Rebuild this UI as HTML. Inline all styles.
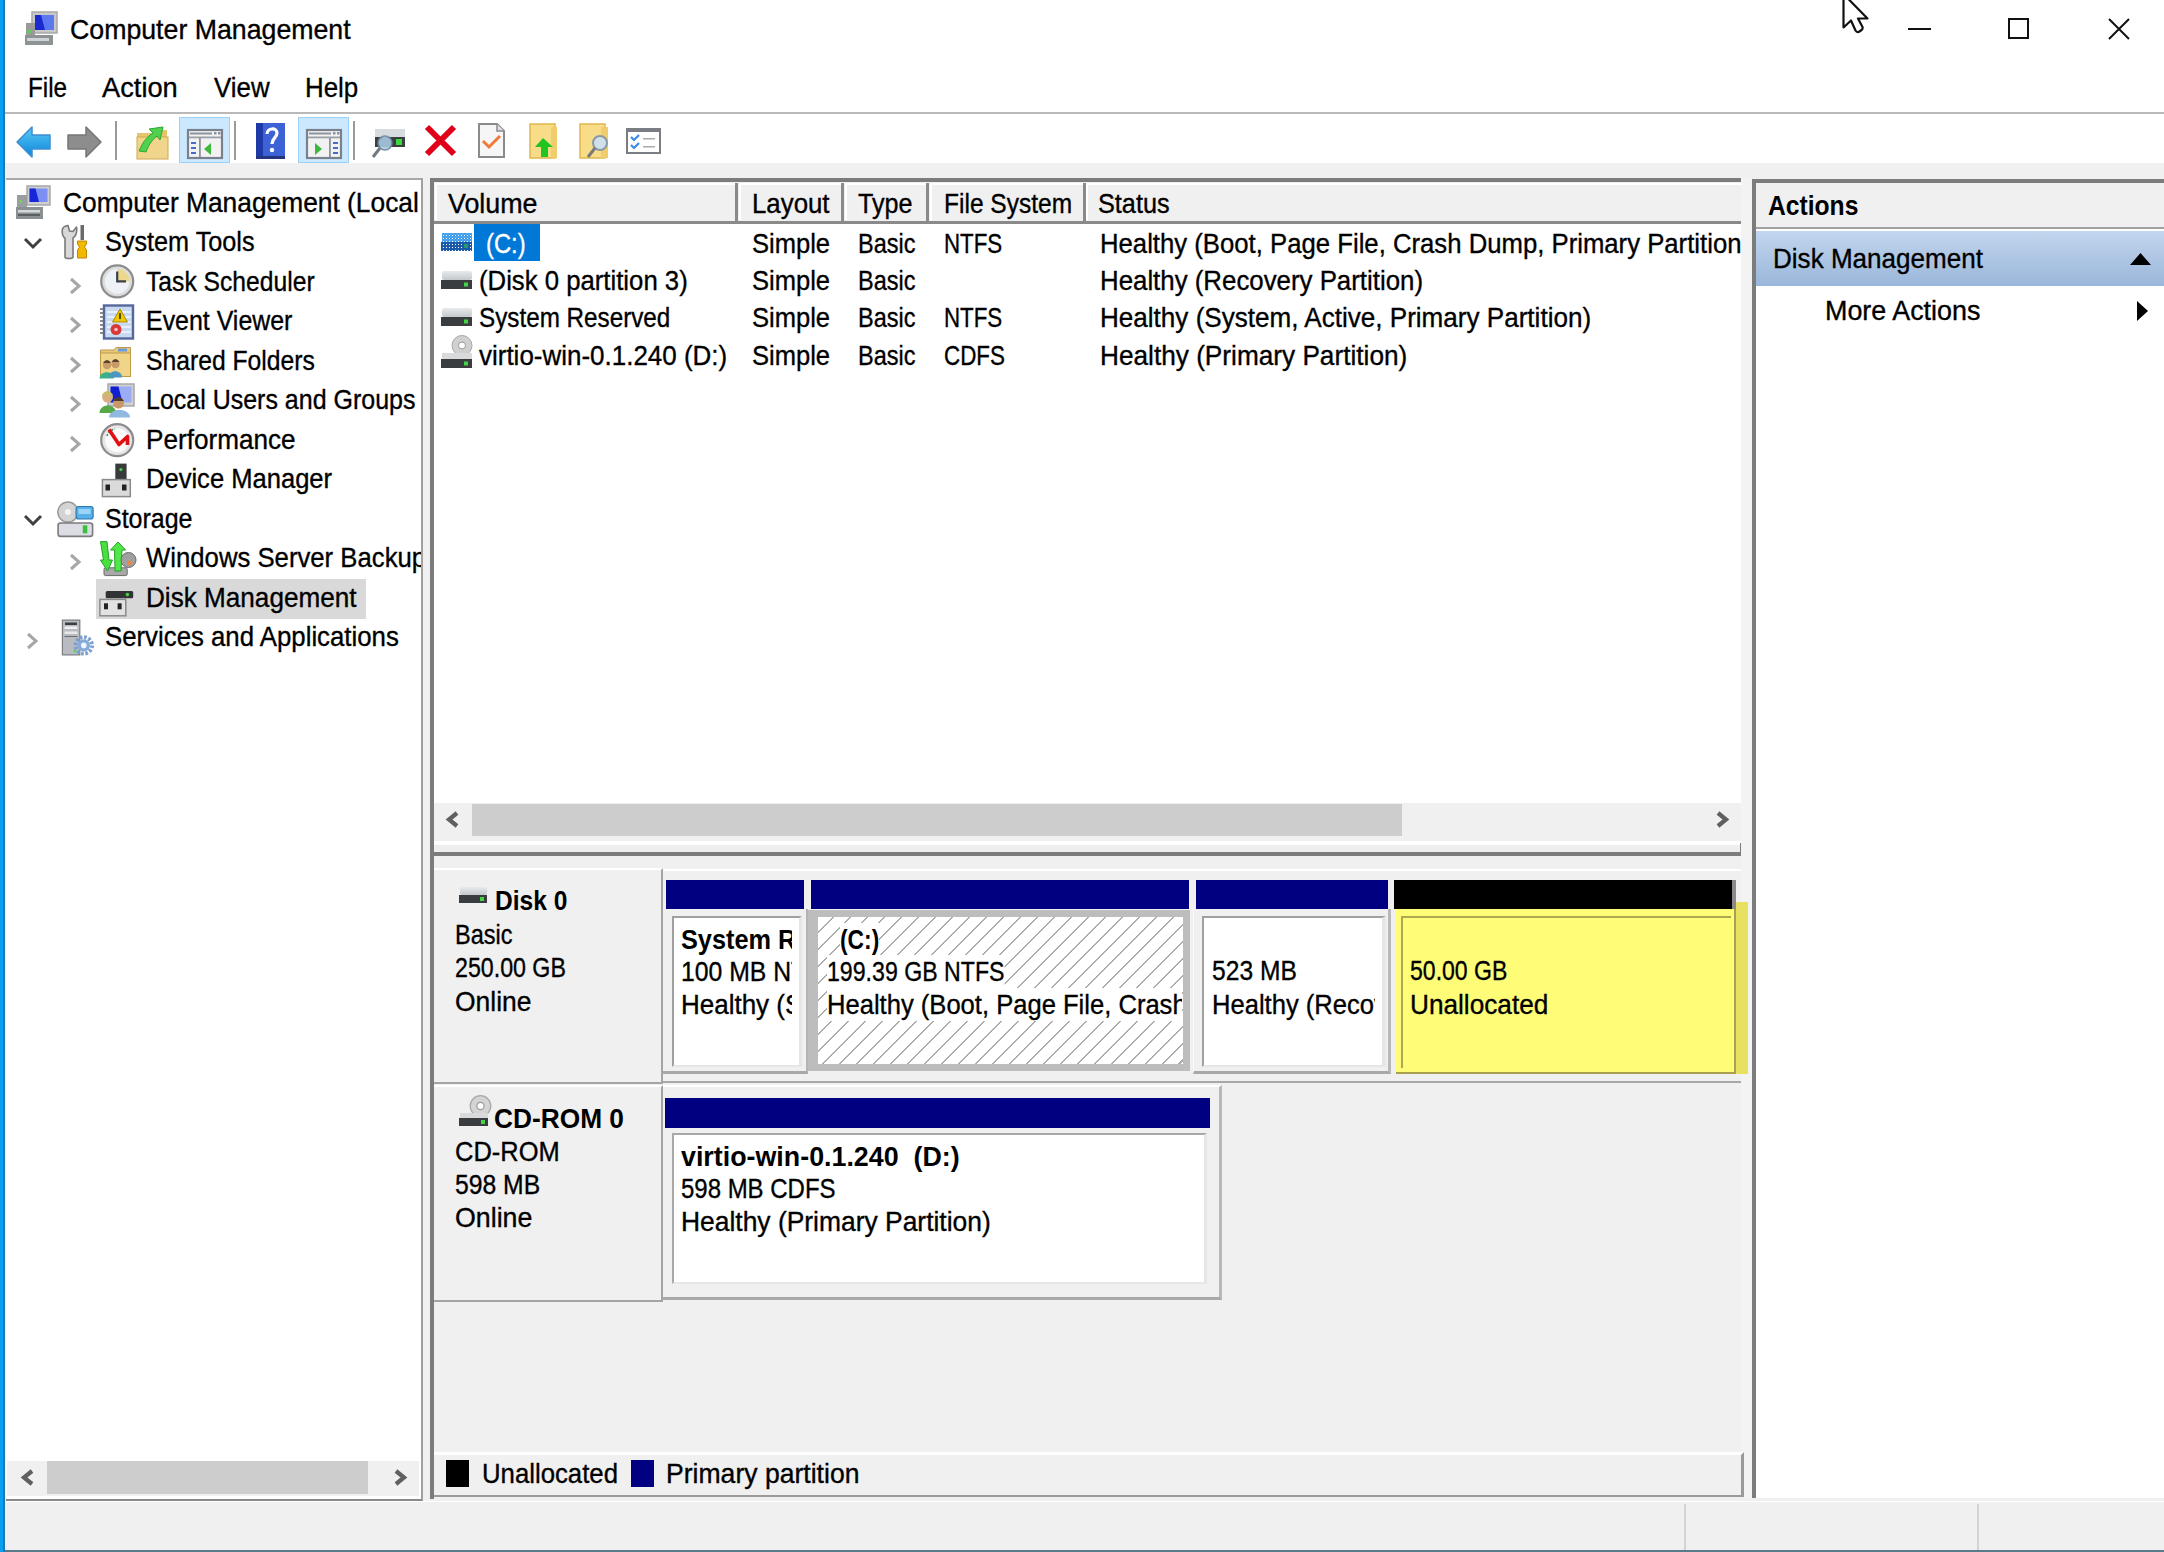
<!DOCTYPE html>
<html><head><meta charset="utf-8"><title>Computer Management</title>
<style>
html,body{margin:0;padding:0;}
body{width:2164px;height:1552px;position:relative;overflow:hidden;background:#f0f0f0;font-family:"Liberation Sans",sans-serif;color:#000;}
.t{position:absolute;white-space:nowrap;-webkit-text-stroke:0.35px currentColor;}
.r{position:absolute;box-sizing:border-box;}
svg{position:absolute;overflow:visible;}
</style></head><body>
<div class="r" style="left:0px;top:0px;width:2164px;height:163px;background:#ffffff;"></div>
<div class="r" style="left:0px;top:112px;width:2164px;height:2px;background:#b9b9b9;"></div>
<div class="t" style="left:70.00px;top:13.20px;font-size:28px;line-height:33.6px;"><span style="display:inline-block;transform:scaleX(0.9540);transform-origin:0 0;">Computer Management</span></div>
<div class="t" style="left:28.30px;top:70.57px;font-size:27.5px;line-height:33.0px;"><span style="display:inline-block;transform:scaleX(0.8811);transform-origin:0 0;">File</span></div>
<div class="t" style="left:102.30px;top:70.57px;font-size:27.5px;line-height:33.0px;"><span style="display:inline-block;transform:scaleX(0.9912);transform-origin:0 0;">Action</span></div>
<div class="t" style="left:213.80px;top:70.57px;font-size:27.5px;line-height:33.0px;"><span style="display:inline-block;transform:scaleX(0.9401);transform-origin:0 0;">View</span></div>
<div class="t" style="left:305.30px;top:70.57px;font-size:27.5px;line-height:33.0px;"><span style="display:inline-block;transform:scaleX(0.9416);transform-origin:0 0;">Help</span></div>
<svg style="left:23px;top:11px" width="35" height="35" viewBox="0 0 35 35">
<rect x="9" y="1" width="25" height="21" fill="#c8c8c8" stroke="#a9a9a9" stroke-width="1.5"/>
<rect x="12" y="4" width="19" height="15" fill="#5a78f0"/>
<path d="M12 4h6l4 15h-10z" fill="#1a2ad0"/>
<rect x="3" y="12" width="9" height="14" fill="#9a9a9a"/>
<rect x="2" y="24" width="28" height="10" fill="#8e9496"/>
<rect x="4" y="27" width="22" height="3" fill="#d0d4d6"/>
<rect x="5" y="19" width="3" height="3" fill="#5cd05c"/>
</svg>
<div class="r" style="left:1908px;top:28px;width:23px;height:2px;background:#111;"></div>
<div class="r" style="left:2008px;top:18px;width:21px;height:21px;background:transparent;border:2px solid #111;"></div>
<svg style="left:2108px;top:18px" width="22" height="22" viewBox="0 0 22 22"><path d="M1 1L21 21M21 1L1 21" stroke="#111" stroke-width="2"/></svg>
<svg style="left:1842px;top:0px" width="27" height="33" viewBox="0 0 27 33"><path d="M1.5 -6 L1.5 27.5 L9 20.5 L13.5 30.5 Q15 33 17.5 31.5 L19.5 30 Q21 29 20.5 27 L16 18.5 L25.5 18.5 Z" fill="#fff" stroke="#111" stroke-width="2.2" stroke-linejoin="round"/></svg>
<svg style="left:16px;top:125px" width="36" height="34" viewBox="0 0 36 34">
<defs><linearGradient id="gb" x1="0" y1="0" x2="0" y2="1"><stop offset="0" stop-color="#5ccaf8"/><stop offset="1" stop-color="#0a84d8"/></linearGradient></defs>
<path d="M1 17 L16 2 L16 10 L34 10 L34 24 L16 24 L16 32 Z" fill="url(#gb)" stroke="#3c8fd0" stroke-width="1.5" stroke-linejoin="round"/>
</svg>
<svg style="left:66px;top:125px" width="36" height="34" viewBox="0 0 36 34">
<path d="M35 17 L20 2 L20 10 L2 10 L2 24 L20 24 L20 32 Z" fill="#8d8d8d" stroke="#767676" stroke-width="1.5" stroke-linejoin="round"/>
</svg>
<div class="r" style="left:115px;top:121px;width:2px;height:39px;background:#9a9a9a;"></div>
<div class="r" style="left:234px;top:121px;width:2px;height:39px;background:#9a9a9a;"></div>
<div class="r" style="left:353px;top:121px;width:2px;height:39px;background:#9a9a9a;"></div>
<svg style="left:137px;top:125px" width="32" height="34" viewBox="0 0 32 34">
<path d="M0 8h16l2 -3h12v29h-30z" fill="#e8c46c"/>
<rect x="0" y="12" width="31" height="22" fill="#f2d58c" stroke="#cfa94f" stroke-width="1"/>
<path d="M2 26 C6 16 11 11 16 8 L12 4 L26 2 L23 15 L20 11 C16 14 12 19 9 27 Z" fill="#4fd04f" stroke="#2fa82f" stroke-width="1"/>
</svg>
<div class="r" style="left:179px;top:117px;width:51px;height:46px;background:#cce8ff;border:1px solid #99d1ff;"></div>
<div class="r" style="left:298px;top:117px;width:51px;height:46px;background:#cce8ff;border:1px solid #99d1ff;"></div>
<svg style="left:187px;top:129px" width="36" height="30" viewBox="0 0 36 30">
<rect x="1" y="1" width="34" height="28" fill="#f2f2f2" stroke="#7a818c" stroke-width="2.2"/>
<rect x="3" y="3.5" width="22" height="2" fill="#8c939c"/>
<rect x="27" y="3" width="2.5" height="2.5" fill="#8c939c"/><rect x="31" y="3" width="2.5" height="2.5" fill="#8c939c"/>
<rect x="2" y="7.5" width="32" height="1.8" fill="#9aa0a8"/>
<rect x="12" y="9" width="1.8" height="19" fill="#8c939c"/>
<rect x="4" y="13" width="5" height="2" fill="#4a6ac8"/><rect x="4" y="18" width="5" height="2" fill="#4a6ac8"/><rect x="4" y="23" width="5" height="2" fill="#4a6ac8"/>
<path d="M17 20 L24 14 L24 26 Z" fill="#3cb83c"/></svg>
<svg style="left:306px;top:129px" width="36" height="30" viewBox="0 0 36 30">
<rect x="1" y="1" width="34" height="28" fill="#f2f2f2" stroke="#7a818c" stroke-width="2.2"/>
<rect x="3" y="3.5" width="22" height="2" fill="#8c939c"/>
<rect x="27" y="3" width="2.5" height="2.5" fill="#8c939c"/><rect x="31" y="3" width="2.5" height="2.5" fill="#8c939c"/>
<rect x="2" y="7.5" width="32" height="1.8" fill="#9aa0a8"/>
<rect x="23" y="9" width="1.8" height="19" fill="#8c939c"/>
<rect x="27" y="13" width="5" height="2" fill="#4a6ac8"/><rect x="27" y="18" width="5" height="2" fill="#4a6ac8"/><rect x="27" y="23" width="5" height="2" fill="#4a6ac8"/>
<path d="M9 14 L16 20 L9 26 Z" fill="#3cb83c"/></svg>
<svg style="left:256px;top:123px" width="29" height="36" viewBox="0 0 29 36">
<rect x="0" y="0" width="29" height="36" fill="#3d62d6"/>
<rect x="0" y="0" width="7" height="36" fill="#1d3aa8"/>
<rect x="0" y="33" width="29" height="3" fill="#23357c"/>
<path d="M11 11 C11 5 21 4 21 10 C21 15 16 15 16 21" fill="none" stroke="#fff" stroke-width="3.2"/>
<circle cx="16" cy="27" r="2.2" fill="#fff"/>
</svg>
<svg style="left:372px;top:128px" width="35" height="31" viewBox="0 0 35 31">
<rect x="3" y="1" width="30" height="8" fill="#d8dcde"/>
<rect x="3" y="9" width="30" height="10" fill="#3b3f42"/>
<rect x="24" y="11" width="6" height="6" fill="#3ed63e"/>
<circle cx="13" cy="15" r="7" fill="#a8c8e0" stroke="#6a8aa0" stroke-width="1.5" opacity="0.9"/>
<path d="M8 20 L1 29" stroke="#707a80" stroke-width="3"/>
</svg>
<svg style="left:425px;top:125px" width="31" height="31" viewBox="0 0 31 31"><path d="M2 2L29 29M29 2L2 29" stroke="#e0001a" stroke-width="6"/></svg>
<svg style="left:478px;top:123px" width="27" height="35" viewBox="0 0 27 35">
<path d="M1 1 H19 L26 8 V34 H1 Z" fill="#f6f6f6" stroke="#8a8a8a" stroke-width="2"/>
<path d="M19 1 V8 H26" fill="#e0e0e0" stroke="#8a8a8a" stroke-width="1.5"/>
<path d="M5 18 L11 24 L22 13" fill="none" stroke="#f07a3a" stroke-width="3"/>
</svg>
<svg style="left:529px;top:123px" width="29" height="35" viewBox="0 0 29 35">
<rect x="1" y="1" width="25" height="34" fill="#f8dc88" stroke="#e0b84c" stroke-width="1.5"/>
<rect x="22" y="4" width="6" height="31" fill="#f0cc6a"/>
<path d="M14 15 L24 24 H19 V34 H12 V24 H6 Z" fill="#22c422"/>
</svg>
<svg style="left:579px;top:123px" width="32" height="35" viewBox="0 0 32 35">
<rect x="1" y="1" width="25" height="34" fill="#f8dc88" stroke="#e0b84c" stroke-width="1.5"/>
<rect x="22" y="4" width="7" height="31" fill="#f0cc6a"/>
<circle cx="21" cy="20" r="7" fill="#cfe0ea" stroke="#8a9aa4" stroke-width="2"/>
<path d="M16 25 L9 34" stroke="#7a7a7a" stroke-width="3"/>
</svg>
<svg style="left:626px;top:128px" width="35" height="26" viewBox="0 0 35 26">
<rect x="1" y="1" width="33" height="24" fill="#fff" stroke="#7a7e84" stroke-width="2"/>
<rect x="1" y="1" width="33" height="3" fill="#7a7e84"/>
<path d="M5 9 L8 12 L13 7 M5 17 L8 20 L13 15" fill="none" stroke="#3a8ae8" stroke-width="2.2"/>
<rect x="17" y="10" width="12" height="1.5" fill="#aaa"/><rect x="17" y="18" width="12" height="1.5" fill="#aaa"/>
</svg>
<div class="r" style="left:6px;top:178px;width:417px;height:1323px;background:#ffffff;border-top:2px solid #a8a8a8;border-right:2px solid #a0a0a0;border-bottom:2px solid #8a8a8a;"></div>
<div class="r" style="left:96px;top:579px;width:270px;height:40px;background:#d9d9d9;"></div>
<div class="t" style="left:63.00px;top:185.67px;font-size:27.5px;line-height:33.0px;width:358.0px;overflow:hidden;"><span style="display:inline-block;transform:scaleX(0.9580);transform-origin:0 0;">Computer Management (Local</span></div>
<svg style="left:15px;top:184.7px" width="38" height="38" viewBox="0 0 38 38">
<rect x="12" y="1" width="23" height="19" fill="#cfcfcf" stroke="#a8a8a8" stroke-width="1.5"/>
<rect x="14.5" y="3.5" width="18" height="13.5" fill="#7c90f4"/>
<path d="M14.5 3.5h6l3.5 13.5h-9.5z" fill="#1626d8"/>
<rect x="2" y="10" width="10" height="15" fill="#9a9e9e"/>
<rect x="4" y="15" width="3" height="3" fill="#6cd06c"/>
<rect x="1" y="22" width="27" height="12" fill="#8a9092"/>
<rect x="3" y="25" width="22" height="2.5" fill="#d4d8da"/>
<rect x="3" y="29" width="22" height="2" fill="#5a6062"/>
</svg>
<div class="t" style="left:104.70px;top:225.17px;font-size:27.5px;line-height:33.0px;"><span style="display:inline-block;transform:scaleX(0.9172);transform-origin:0 0;">System Tools</span></div>
<svg style="left:57px;top:224.2px" width="38" height="38" viewBox="0 0 38 38">
<path d="M5.5 5 C4.5 10 6.5 13.5 8 14 L8 33 C8 35 16 35 16 33 L16 14 C18 13 20.5 9 19.5 3 L16 7.5 L12.5 7 L11 1.5 C8 2 6 3 5.5 5 Z" fill="#d8d8d8" stroke="#7a7a7a" stroke-width="1.6" stroke-linejoin="round"/>
<rect x="23.5" y="1" width="3.5" height="15" fill="#6a6a6a"/>
<path d="M20.5 17 h9 v3 l-2 3 l2 3 v8 h-9 v-8 l2 -3 l-2 -3 z" fill="#f0b800" stroke="#c08800" stroke-width="1"/>
</svg>
<svg style="left:23px;top:237.2px" width="20" height="14" viewBox="0 0 20 14"><path d="M2 2 L10 10 L18 2" fill="none" stroke="#404040" stroke-width="3"/></svg>
<div class="t" style="left:146.40px;top:264.67px;font-size:27.5px;line-height:33.0px;"><span style="display:inline-block;transform:scaleX(0.8968);transform-origin:0 0;">Task Scheduler</span></div>
<svg style="left:99px;top:263.7px" width="38" height="38" viewBox="0 0 38 38">
<circle cx="18.2" cy="17.4" r="16" fill="#dcdcdc" stroke="#8c8c8c" stroke-width="2.2"/>
<circle cx="18.2" cy="17.4" r="12.3" fill="#eef2f8"/>
<path d="M18.2 5.1 A12.3 12.3 0 0 1 30.5 17.4 L18.2 17.4 Z" fill="#ecd88c"/>
<path d="M18.2 7.5 V17.4 H27" stroke="#3a4048" stroke-width="2.2" fill="none"/>
</svg>
<svg style="left:69px;top:276.7px" width="13" height="18" viewBox="0 0 13 18"><path d="M2 2 L10 9 L2 16" fill="none" stroke="#a6a6a6" stroke-width="3"/></svg>
<div class="t" style="left:146.40px;top:304.17px;font-size:27.5px;line-height:33.0px;"><span style="display:inline-block;transform:scaleX(0.9065);transform-origin:0 0;">Event Viewer</span></div>
<svg style="left:99px;top:303.2px" width="38" height="38" viewBox="0 0 38 38">
<rect x="5" y="2.5" width="29" height="33" fill="#c8daf2" stroke="#56679c" stroke-width="2.4"/>
<path d="M8 9 h24 M8 14 h24 M8 19 h24 M8 24 h24 M8 29 h24" stroke="#f4f8ff" stroke-width="1.6"/>
<path d="M2.5 5 v28" stroke="#8a8a8a" stroke-width="3" stroke-dasharray="2 2"/>
<path d="M21 6 L28.5 19 H13.5 Z" fill="#f0c800" stroke="#a88a00" stroke-width="1"/>
<rect x="20" y="10" width="2" height="6" fill="#5a4a00"/>
<circle cx="17" cy="26.5" r="5.5" fill="#d83838"/>
<circle cx="17" cy="26.5" r="1.8" fill="#ffc0c0"/>
</svg>
<svg style="left:69px;top:316.2px" width="13" height="18" viewBox="0 0 13 18"><path d="M2 2 L10 9 L2 16" fill="none" stroke="#a6a6a6" stroke-width="3"/></svg>
<div class="t" style="left:146.40px;top:343.67px;font-size:27.5px;line-height:33.0px;"><span style="display:inline-block;transform:scaleX(0.8979);transform-origin:0 0;">Shared Folders</span></div>
<svg style="left:99px;top:342.7px" width="38" height="38" viewBox="0 0 38 38">
<path d="M1.5 7 H15 L17 4.5 H31.5 V33.5 H1.5 Z" fill="#e8c878" stroke="#c09a48" stroke-width="1"/>
<rect x="1.5" y="10" width="30" height="23.5" fill="#f0d488" stroke="#c09a48" stroke-width="1"/>
<rect x="19" y="5.5" width="9" height="3" fill="#6a9ad8"/>
<circle cx="8" cy="22" r="4.2" fill="#c89a68"/><path d="M4 20 q4 -6 8 0" fill="#5a4030"/>
<circle cx="16.5" cy="21" r="4.2" fill="#c89a68"/><path d="M12.5 19 q4 -6 8 0" fill="#5a4030"/>
<path d="M0.5 35.5 C0.5 27 15 27 15 35.5 Z" fill="#3ab088"/>
<path d="M9.5 34.5 C9.5 26 23 26 23 34.5 Z" fill="#4a98c0"/>
</svg>
<svg style="left:69px;top:355.7px" width="13" height="18" viewBox="0 0 13 18"><path d="M2 2 L10 9 L2 16" fill="none" stroke="#a6a6a6" stroke-width="3"/></svg>
<div class="t" style="left:146.40px;top:383.17px;font-size:27.5px;line-height:33.0px;"><span style="display:inline-block;transform:scaleX(0.9086);transform-origin:0 0;">Local Users and Groups</span></div>
<svg style="left:99px;top:382.2px" width="38" height="38" viewBox="0 0 38 38">
<rect x="9" y="2" width="26" height="22" fill="#d0d0d0" stroke="#a8a8a8" stroke-width="1.5"/>
<rect x="11.5" y="4.5" width="21" height="16" fill="#9aacf4"/>
<path d="M11.5 4.5h8l4 16h-12z" fill="#1020d0"/>
<circle cx="8.5" cy="15" r="5.5" fill="#d8b080"/><path d="M3 13 q5.5 -8 11 0" fill="#c8c060"/>
<path d="M0.5 31 C0.5 21 17 21 17 31 Z" fill="#58a848"/>
<circle cx="19.5" cy="21" r="5.5" fill="#c89868"/><path d="M14 19 q5.5 -8 11 0" fill="#4a3828"/>
<path d="M10 35.5 C10 25.5 31 25.5 31 35.5 Z" fill="#90b8e0"/>
</svg>
<svg style="left:69px;top:395.2px" width="13" height="18" viewBox="0 0 13 18"><path d="M2 2 L10 9 L2 16" fill="none" stroke="#a6a6a6" stroke-width="3"/></svg>
<div class="t" style="left:146.40px;top:422.67px;font-size:27.5px;line-height:33.0px;"><span style="display:inline-block;transform:scaleX(0.9500);transform-origin:0 0;">Performance</span></div>
<svg style="left:99px;top:421.7px" width="38" height="38" viewBox="0 0 38 38">
<circle cx="18.2" cy="18.2" r="16" fill="#e6e6e6" stroke="#8c8c8c" stroke-width="2.2"/>
<circle cx="18.2" cy="18.2" r="12" fill="#fafafa"/>
<path d="M8 14 A11 11 0 0 1 16 7" stroke="#4a8a6a" stroke-width="1.6" fill="none" stroke-dasharray="2 1.5"/>
<path d="M10 7.5 L20 22.5 L28.5 14.5 V23" fill="none" stroke="#e01010" stroke-width="3.6" stroke-linejoin="round"/>
</svg>
<svg style="left:69px;top:434.7px" width="13" height="18" viewBox="0 0 13 18"><path d="M2 2 L10 9 L2 16" fill="none" stroke="#a6a6a6" stroke-width="3"/></svg>
<div class="t" style="left:146.40px;top:462.17px;font-size:27.5px;line-height:33.0px;"><span style="display:inline-block;transform:scaleX(0.9293);transform-origin:0 0;">Device Manager</span></div>
<svg style="left:99px;top:461.2px" width="38" height="38" viewBox="0 0 38 38">
<rect x="16.3" y="2.6" width="11.3" height="15.5" fill="#383a3c"/>
<circle cx="21.9" cy="8.6" r="1.6" fill="#48d048"/>
<rect x="3.4" y="18.6" width="27.9" height="17" fill="#dadada" stroke="#8a8a8a" stroke-width="1.5"/>
<rect x="6.5" y="23.5" width="4.5" height="6" fill="#222"/><rect x="23" y="23.5" width="4.5" height="6" fill="#222"/>
</svg>
<div class="t" style="left:104.70px;top:501.67px;font-size:27.5px;line-height:33.0px;"><span style="display:inline-block;transform:scaleX(0.9079);transform-origin:0 0;">Storage</span></div>
<svg style="left:57px;top:500.7px" width="38" height="38" viewBox="0 0 38 38">
<circle cx="10.9" cy="11.1" r="10" fill="#d4d4d4" stroke="#9a9a9a" stroke-width="1.5"/>
<circle cx="10.9" cy="11.1" r="3" fill="#f4f4f4"/>
<rect x="19.1" y="5.5" width="17" height="12.5" rx="2.5" fill="#58b0e8" stroke="#2a78b0" stroke-width="1.2"/>
<rect x="21.5" y="8" width="12" height="5" fill="#9ad4f8"/>
<rect x="1.1" y="22" width="34.5" height="13.4" rx="2.5" fill="#dcdce4" stroke="#7a7a7a" stroke-width="1.6"/>
<rect x="25.8" y="24.3" width="4.5" height="8" fill="#38c038"/>
</svg>
<svg style="left:23px;top:513.7px" width="20" height="14" viewBox="0 0 20 14"><path d="M2 2 L10 10 L18 2" fill="none" stroke="#404040" stroke-width="3"/></svg>
<div class="t" style="left:146.40px;top:541.17px;font-size:27.5px;line-height:33.0px;width:274.6px;overflow:hidden;"><span style="display:inline-block;transform:scaleX(0.9350);transform-origin:0 0;">Windows Server Backup</span></div>
<svg style="left:99px;top:540.2px" width="38" height="38" viewBox="0 0 38 38">
<rect x="5" y="27.8" width="23.2" height="7.8" rx="1.5" fill="#a8a8a8" stroke="#6a6a6a" stroke-width="1"/>
<path d="M1.5 1.6 L8 1.6 L10 20 L13.5 20 L8.5 31 L1.4 20 L4.5 20 Z" fill="#48e040" stroke="#28a028" stroke-width="1"/>
<path d="M19 2 L26.6 10 L23 10 L22 31 L16 31 L15.5 10 L11.5 10 Z" fill="#50e848" stroke="#28a028" stroke-width="1"/>
<circle cx="29.5" cy="20" r="7.5" fill="#a0a0a0" stroke="#6a6a6a" stroke-width="1"/>
<circle cx="30.5" cy="23" r="2.5" fill="#e88848"/>
</svg>
<svg style="left:69px;top:553.2px" width="13" height="18" viewBox="0 0 13 18"><path d="M2 2 L10 9 L2 16" fill="none" stroke="#a6a6a6" stroke-width="3"/></svg>
<div class="t" style="left:146.40px;top:580.67px;font-size:27.5px;line-height:33.0px;"><span style="display:inline-block;transform:scaleX(0.9498);transform-origin:0 0;">Disk Management</span></div>
<svg style="left:99px;top:579.7px" width="38" height="38" viewBox="0 0 38 38">
<rect x="6.7" y="11" width="27.5" height="7.3" rx="1.5" fill="#303234"/>
<circle cx="28.4" cy="14.6" r="1.8" fill="#40d040"/>
<rect x="0.9" y="19.4" width="25.9" height="16.4" fill="#e2e2e2" stroke="#8a8a8a" stroke-width="1.5"/>
<rect x="5" y="23.3" width="4" height="6" fill="#222"/><rect x="18.6" y="23.3" width="4" height="6" fill="#222"/>
</svg>
<div class="t" style="left:104.70px;top:620.17px;font-size:27.5px;line-height:33.0px;"><span style="display:inline-block;transform:scaleX(0.9375);transform-origin:0 0;">Services and Applications</span></div>
<svg style="left:57px;top:619.2px" width="38" height="38" viewBox="0 0 38 38">
<rect x="5.4" y="1.1" width="17.4" height="34.8" fill="#b8bcc0" stroke="#7a7e82" stroke-width="1.2"/>
<rect x="8" y="3.5" width="12" height="2.5" fill="#3a3e42"/>
<rect x="7.5" y="7.5" width="13" height="2.5" fill="#f0f0f0"/>
<rect x="7.5" y="12.5" width="13" height="2.5" fill="#e8e8e8"/>
<rect x="7.5" y="17" width="13" height="1" fill="#6a6e72"/>
<circle cx="26.8" cy="26.4" r="8.2" fill="none" stroke="#7aa0d0" stroke-width="4" stroke-dasharray="2.6 1.7"/>
<circle cx="26.8" cy="26.4" r="6.2" fill="#88aad8"/>
<circle cx="26.8" cy="26.4" r="2.8" fill="#f0f8ff"/>
<circle cx="18" cy="32" r="1.5" fill="#60d060"/>
</svg>
<svg style="left:26.4px;top:632.2px" width="13" height="18" viewBox="0 0 13 18"><path d="M2 2 L10 9 L2 16" fill="none" stroke="#a6a6a6" stroke-width="3"/></svg>
<div class="r" style="left:7px;top:1461px;width:412px;height:35px;background:#f0f0f0;"></div>
<div class="r" style="left:47px;top:1461px;width:321px;height:33px;background:#cdcdcd;"></div>
<svg style="left:20px;top:1469px" width="14" height="17" viewBox="0 0 14 17"><path d="M12 2 L4 8.5 L12 15" fill="none" stroke="#606060" stroke-width="4.2"/></svg>
<svg style="left:394px;top:1469px" width="14" height="17" viewBox="0 0 14 17"><path d="M2 2 L10 8.5 L2 15" fill="none" stroke="#606060" stroke-width="4.2"/></svg>
<div class="r" style="left:430px;top:178px;width:1311px;height:678px;background:#ffffff;border-top:4px solid #7c7c7c;border-left:4px solid #7c7c7c;border-bottom:4px solid #7c7c7c;"></div>
<div class="r" style="left:1741px;top:178px;width:11px;height:1320px;background:#f3f3f3;"></div>
<div class="r" style="left:434px;top:182px;width:1307px;height:42px;background:#f0f0f0;border-bottom:3px solid #8a8a8a;"></div>
<div class="r" style="left:435px;top:183px;width:302.5px;height:37px;background:transparent;border-top:2px solid #ffffff;border-left:2px solid #ffffff;"></div>
<div class="r" style="left:738.5px;top:183px;width:105.0px;height:37px;background:transparent;border-top:2px solid #ffffff;border-left:2px solid #ffffff;"></div>
<div class="r" style="left:844.5px;top:183px;width:84.5px;height:37px;background:transparent;border-top:2px solid #ffffff;border-left:2px solid #ffffff;"></div>
<div class="r" style="left:930px;top:183px;width:155px;height:37px;background:transparent;border-top:2px solid #ffffff;border-left:2px solid #ffffff;"></div>
<div class="r" style="left:1086px;top:183px;width:656px;height:37px;background:transparent;border-top:2px solid #ffffff;border-left:2px solid #ffffff;"></div>
<div class="r" style="left:735px;top:183px;width:3px;height:38px;background:#8a8a8a;"></div>
<div class="r" style="left:840.5px;top:183px;width:3px;height:38px;background:#8a8a8a;"></div>
<div class="r" style="left:926px;top:183px;width:3px;height:38px;background:#8a8a8a;"></div>
<div class="r" style="left:1082.5px;top:183px;width:3px;height:38px;background:#8a8a8a;"></div>
<div class="t" style="left:448.30px;top:186.77px;font-size:27.5px;line-height:33.0px;"><span style="display:inline-block;transform:scaleX(0.9755);transform-origin:0 0;">Volume</span></div>
<div class="t" style="left:752.40px;top:186.77px;font-size:27.5px;line-height:33.0px;"><span style="display:inline-block;transform:scaleX(0.9392);transform-origin:0 0;">Layout</span></div>
<div class="t" style="left:858.00px;top:186.77px;font-size:27.5px;line-height:33.0px;"><span style="display:inline-block;transform:scaleX(0.9140);transform-origin:0 0;">Type</span></div>
<div class="t" style="left:943.60px;top:186.77px;font-size:27.5px;line-height:33.0px;"><span style="display:inline-block;transform:scaleX(0.8919);transform-origin:0 0;">File System</span></div>
<div class="t" style="left:1098.00px;top:186.77px;font-size:27.5px;line-height:33.0px;"><span style="display:inline-block;transform:scaleX(0.9179);transform-origin:0 0;">Status</span></div>
<div class="r" style="left:474px;top:224px;width:66px;height:37px;background:#0078d7;"></div>
<svg style="left:441px;top:232.5px" width="31" height="18" viewBox="0 0 31 18">
<defs><pattern id="dith" width="3" height="3" patternUnits="userSpaceOnUse"><rect width="3" height="3" fill="#3a9ae8"/><rect x="2" y="2" width="1" height="1" fill="#ffffff"/><rect x="0.5" y="0.5" width="1" height="1" fill="#8ccaf8"/></pattern>
<pattern id="dith2" width="3" height="3" patternUnits="userSpaceOnUse"><rect width="3" height="3" fill="#1a5aa8"/><rect x="2" y="2" width="1" height="1" fill="#ffffff"/></pattern></defs>
<rect x="1" y="0" width="30" height="9" fill="url(#dith)"/>
<rect x="0" y="9" width="31" height="9" fill="url(#dith2)"/>
<rect x="23" y="11" width="4" height="4" fill="#2a9a6a"/>
</svg>
<div class="t" style="left:486.00px;top:226.97px;font-size:27.5px;line-height:33.0px;color:#ffffff;"><span style="display:inline-block;transform:scaleX(0.8654);transform-origin:0 0;">(C:)</span></div>
<div class="t" style="left:752.40px;top:226.97px;font-size:27.5px;line-height:33.0px;"><span style="display:inline-block;transform:scaleX(0.9286);transform-origin:0 0;">Simple</span></div>
<div class="t" style="left:858.00px;top:226.97px;font-size:27.5px;line-height:33.0px;"><span style="display:inline-block;transform:scaleX(0.8550);transform-origin:0 0;">Basic</span></div>
<div class="t" style="left:943.60px;top:226.97px;font-size:27.5px;line-height:33.0px;"><span style="display:inline-block;transform:scaleX(0.8111);transform-origin:0 0;">NTFS</span></div>
<div class="t" style="left:1099.50px;top:226.97px;font-size:27.5px;line-height:33.0px;width:641.5px;overflow:hidden;"><span style="display:inline-block;transform:scaleX(0.9348);transform-origin:0 0;">Healthy (Boot, Page File, Crash Dump, Primary Partition</span></div>
<svg style="left:441px;top:270.5px" width="31" height="18" viewBox="0 0 31 18">
<defs><linearGradient id="dg" x1="0" y1="0" x2="0" y2="1"><stop offset="0" stop-color="#e8eaec"/><stop offset="1" stop-color="#c4c8cc"/></linearGradient></defs>
<rect x="1" y="0" width="30" height="9" rx="2" fill="url(#dg)"/>
<rect x="0" y="9" width="31" height="9" fill="#3a3d40"/>
<rect x="23" y="11.5" width="4" height="4" fill="#42d442"/>
</svg>
<div class="t" style="left:479.20px;top:263.97px;font-size:27.5px;line-height:33.0px;"><span style="display:inline-block;transform:scaleX(0.9354);transform-origin:0 0;">(Disk 0 partition 3)</span></div>
<div class="t" style="left:752.40px;top:263.97px;font-size:27.5px;line-height:33.0px;"><span style="display:inline-block;transform:scaleX(0.9286);transform-origin:0 0;">Simple</span></div>
<div class="t" style="left:858.00px;top:263.97px;font-size:27.5px;line-height:33.0px;"><span style="display:inline-block;transform:scaleX(0.8550);transform-origin:0 0;">Basic</span></div>
<div class="t" style="left:1099.50px;top:263.97px;font-size:27.5px;line-height:33.0px;width:641.5px;overflow:hidden;"><span style="display:inline-block;transform:scaleX(0.9393);transform-origin:0 0;">Healthy (Recovery Partition)</span></div>
<svg style="left:441px;top:307.9px" width="31" height="18" viewBox="0 0 31 18">
<defs><linearGradient id="dg" x1="0" y1="0" x2="0" y2="1"><stop offset="0" stop-color="#e8eaec"/><stop offset="1" stop-color="#c4c8cc"/></linearGradient></defs>
<rect x="1" y="0" width="30" height="9" rx="2" fill="url(#dg)"/>
<rect x="0" y="9" width="31" height="9" fill="#3a3d40"/>
<rect x="23" y="11.5" width="4" height="4" fill="#42d442"/>
</svg>
<div class="t" style="left:479.20px;top:301.37px;font-size:27.5px;line-height:33.0px;"><span style="display:inline-block;transform:scaleX(0.8816);transform-origin:0 0;">System Reserved</span></div>
<div class="t" style="left:752.40px;top:301.37px;font-size:27.5px;line-height:33.0px;"><span style="display:inline-block;transform:scaleX(0.9286);transform-origin:0 0;">Simple</span></div>
<div class="t" style="left:858.00px;top:301.37px;font-size:27.5px;line-height:33.0px;"><span style="display:inline-block;transform:scaleX(0.8550);transform-origin:0 0;">Basic</span></div>
<div class="t" style="left:943.60px;top:301.37px;font-size:27.5px;line-height:33.0px;"><span style="display:inline-block;transform:scaleX(0.8111);transform-origin:0 0;">NTFS</span></div>
<div class="t" style="left:1099.50px;top:301.37px;font-size:27.5px;line-height:33.0px;width:641.5px;overflow:hidden;"><span style="display:inline-block;transform:scaleX(0.9480);transform-origin:0 0;">Healthy (System, Active, Primary Partition)</span></div>
<svg style="left:441px;top:336.5px" width="31" height="32" viewBox="0 0 31 32">
<circle cx="21" cy="8.5" r="10" fill="#d0d0d0" stroke="#a8a8a8" stroke-width="1"/>
<circle cx="21" cy="8.5" r="3.5" fill="#ffffff" stroke="#9a9a9a" stroke-width="1"/>
<rect x="1" y="16" width="30" height="6" fill="#d8dadc"/>
<rect x="0" y="22" width="31" height="9" fill="#3a3d40"/>
<rect x="23" y="24.5" width="4" height="4" fill="#42d442"/>
</svg>
<div class="t" style="left:479.20px;top:338.87px;font-size:27.5px;line-height:33.0px;"><span style="display:inline-block;transform:scaleX(0.9442);transform-origin:0 0;">virtio-win-0.1.240 (D:)</span></div>
<div class="t" style="left:752.40px;top:338.87px;font-size:27.5px;line-height:33.0px;"><span style="display:inline-block;transform:scaleX(0.9286);transform-origin:0 0;">Simple</span></div>
<div class="t" style="left:858.00px;top:338.87px;font-size:27.5px;line-height:33.0px;"><span style="display:inline-block;transform:scaleX(0.8550);transform-origin:0 0;">Basic</span></div>
<div class="t" style="left:943.60px;top:338.87px;font-size:27.5px;line-height:33.0px;"><span style="display:inline-block;transform:scaleX(0.8134);transform-origin:0 0;">CDFS</span></div>
<div class="t" style="left:1099.50px;top:338.87px;font-size:27.5px;line-height:33.0px;width:641.5px;overflow:hidden;"><span style="display:inline-block;transform:scaleX(0.9529);transform-origin:0 0;">Healthy (Primary Partition)</span></div>
<div class="r" style="left:434px;top:803px;width:1307px;height:38px;background:#f0f0f0;"></div>
<div class="r" style="left:472px;top:804px;width:930px;height:32px;background:#cdcdcd;"></div>
<svg style="left:445px;top:811px" width="14" height="17" viewBox="0 0 14 17"><path d="M12 2 L4 8.5 L12 15" fill="none" stroke="#606060" stroke-width="4.2"/></svg>
<svg style="left:1716px;top:811px" width="14" height="17" viewBox="0 0 14 17"><path d="M2 2 L10 8.5 L2 15" fill="none" stroke="#606060" stroke-width="4.2"/></svg>
<div class="r" style="left:434px;top:840.5px;width:1307px;height:11.5px;background:#eeeeee;border-top:4px solid #ffffff;"></div>
<div class="r" style="left:1739.5px;top:843px;width:1.5px;height:13px;background:#7c7c7c;"></div>
<div class="r" style="left:430px;top:856px;width:4px;height:643px;background:#7c7c7c;"></div>
<div class="r" style="left:434px;top:856px;width:1307px;height:597px;background:#f0f0f0;"></div>
<div class="r" style="left:434px;top:867.5px;width:229px;height:216.5px;background:#f0f0f0;border-top:2px solid #ffffff;border-right:2px solid #a4a4a4;border-bottom:2px solid #a4a4a4;"></div>
<svg style="left:459px;top:887px" width="28" height="16" viewBox="0 0 28 16">
<defs><linearGradient id="dg2" x1="0" y1="0" x2="0" y2="1"><stop offset="0" stop-color="#e8eaec"/><stop offset="1" stop-color="#c4c8cc"/></linearGradient></defs>
<rect x="1" y="0" width="27" height="8" rx="2" fill="url(#dg2)"/>
<rect x="0" y="8" width="28" height="8" fill="#3a3d40"/>
<rect x="21" y="10" width="4" height="4" fill="#42d442"/>
</svg>
<div class="t" style="left:495.40px;top:884.37px;font-size:27.5px;line-height:33.0px;font-weight:bold;-webkit-text-stroke:0;"><span style="display:inline-block;transform:scaleX(0.8926);transform-origin:0 0;">Disk 0</span></div>
<div class="t" style="left:455.20px;top:917.97px;font-size:27.5px;line-height:33.0px;"><span style="display:inline-block;transform:scaleX(0.8550);transform-origin:0 0;">Basic</span></div>
<div class="t" style="left:455.20px;top:951.37px;font-size:27.5px;line-height:33.0px;"><span style="display:inline-block;transform:scaleX(0.8433);transform-origin:0 0;">250.00 GB</span></div>
<div class="t" style="left:455.20px;top:984.97px;font-size:27.5px;line-height:33.0px;"><span style="display:inline-block;transform:scaleX(0.9610);transform-origin:0 0;">Online</span></div>
<div class="r" style="left:663px;top:869px;width:1078px;height:2px;background:#ffffff;"></div>
<div class="r" style="left:663px;top:1080.5px;width:1078px;height:2px;background:#a8a8a8;"></div>
<div class="r" style="left:663px;top:909px;width:145px;height:164.5px;background:#f0f0f0;border-right:2.5px solid #b4b4b4;border-bottom:3px solid #a8a8a8;"></div>
<div class="r" style="left:665.5px;top:880px;width:138.5px;height:29px;background:#000080;"></div>
<div class="r" style="left:671.5px;top:915.5px;width:130px;height:151px;background:#ffffff;border-top:2.5px solid #a0a0a0;border-left:2.5px solid #a0a0a0;border-right:3px solid #e6e6e6;border-bottom:2.5px solid #e6e6e6;"></div>
<div class="t" style="left:681.00px;top:922.97px;font-size:27.5px;line-height:33.0px;font-weight:bold;-webkit-text-stroke:0;width:111.0px;overflow:hidden;"><span style="display:inline-block;transform:scaleX(0.9200);transform-origin:0 0;">System Reserved</span></div>
<div class="t" style="left:681.00px;top:954.97px;font-size:27.5px;line-height:33.0px;width:111.0px;overflow:hidden;"><span style="display:inline-block;transform:scaleX(0.9000);transform-origin:0 0;">100 MB NTFS</span></div>
<div class="t" style="left:681.00px;top:987.97px;font-size:27.5px;line-height:33.0px;width:111.0px;overflow:hidden;"><span style="display:inline-block;transform:scaleX(0.9450);transform-origin:0 0;">Healthy (System, Active, Primary Partition)</span></div>
<div class="r" style="left:810.5px;top:880px;width:378px;height:29px;background:#000080;"></div>
<div class="r" style="left:808px;top:909.5px;width:382px;height:161px;background:#bdbdbd;"></div>
<div class="r" style="left:818px;top:917px;width:365px;height:147px;background:#ffffff;background-image:repeating-linear-gradient(135deg, transparent 0px, transparent 10.5px, #adadad 10.5px, #adadad 12px);"></div>
<div class="t" style="left:839.50px;top:922.97px;font-size:27.5px;line-height:33.0px;font-weight:bold;-webkit-text-stroke:0;"><span style="display:inline-block;transform:scaleX(0.8296);transform-origin:0 0;background:#fff;">(C:)</span></div>
<div class="t" style="left:827.00px;top:954.97px;font-size:27.5px;line-height:33.0px;"><span style="display:inline-block;transform:scaleX(0.8417);transform-origin:0 0;background:#fff;">199.39 GB NTFS</span></div>
<div class="t" style="left:827.00px;top:987.97px;font-size:27.5px;line-height:33.0px;width:355.0px;overflow:hidden;"><span style="display:inline-block;transform:scaleX(0.9300);transform-origin:0 0;background:#fff;">Healthy (Boot, Page File, Crash Dump, Primary Partition)</span></div>
<div class="r" style="left:1193px;top:909px;width:198px;height:164.5px;background:#f0f0f0;border-left:1.5px solid #fafafa;border-right:3px solid #b8b8b8;border-bottom:3px solid #a8a8a8;"></div>
<div class="r" style="left:1195.5px;top:880px;width:192px;height:29px;background:#000080;"></div>
<div class="r" style="left:1202px;top:915.5px;width:183.5px;height:151px;background:#ffffff;border-top:2.5px solid #a0a0a0;border-left:2.5px solid #a0a0a0;border-right:4px solid #e6e6e6;border-bottom:2.5px solid #e6e6e6;"></div>
<div class="t" style="left:1212.00px;top:954.47px;font-size:27.5px;line-height:33.0px;"><span style="display:inline-block;transform:scaleX(0.8950);transform-origin:0 0;">523 MB</span></div>
<div class="t" style="left:1212.00px;top:987.97px;font-size:27.5px;line-height:33.0px;width:163.0px;overflow:hidden;"><span style="display:inline-block;transform:scaleX(0.9300);transform-origin:0 0;">Healthy (Recovery Partition)</span></div>
<div class="r" style="left:1395.5px;top:902px;width:352.5px;height:172px;background:#e8e060;"></div>
<div class="r" style="left:1395.5px;top:909px;width:340.5px;height:165px;background:#fffc78;border-right:2.5px solid #a8a050;border-bottom:2.5px solid #a8a050;"></div>
<div class="r" style="left:1400.5px;top:915.5px;width:330px;height:152px;background:transparent;border-top:2.5px solid #b0a850;border-left:2.5px solid #b0a850;"></div>
<div class="r" style="left:1393.5px;top:880px;width:338.5px;height:28.5px;background:#000000;"></div>
<div class="r" style="left:1732px;top:880px;width:3.5px;height:29px;background:#8a8a8a;"></div>
<div class="t" style="left:1410.00px;top:954.47px;font-size:27.5px;line-height:33.0px;"><span style="display:inline-block;transform:scaleX(0.8378);transform-origin:0 0;">50.00 GB</span></div>
<div class="t" style="left:1410.00px;top:987.97px;font-size:27.5px;line-height:33.0px;"><span style="display:inline-block;transform:scaleX(0.9522);transform-origin:0 0;">Unallocated</span></div>
<div class="r" style="left:434px;top:1085px;width:229px;height:217px;background:#f0f0f0;border-top:2px solid #ffffff;border-right:2px solid #a4a4a4;border-bottom:2.5px solid #a4a4a4;"></div>
<svg style="left:459px;top:1096px" width="32" height="30" viewBox="0 0 32 30">
<circle cx="21.5" cy="10" r="10.3" fill="#d4d4d4" stroke="#a8a8a8" stroke-width="1.2"/>
<circle cx="21.5" cy="10" r="3.6" fill="#ffffff" stroke="#9a9a9a" stroke-width="1.2"/>
<rect x="1" y="17" width="28" height="5" fill="#d8dadc"/>
<rect x="0" y="22" width="29" height="8" fill="#3a3d40"/>
<rect x="22" y="24" width="4" height="4" fill="#42d442"/>
</svg>
<div class="t" style="left:493.80px;top:1102.47px;font-size:27.5px;line-height:33.0px;font-weight:bold;-webkit-text-stroke:0;"><span style="display:inline-block;transform:scaleX(0.9559);transform-origin:0 0;">CD-ROM 0</span></div>
<div class="t" style="left:455.20px;top:1135.47px;font-size:27.5px;line-height:33.0px;"><span style="display:inline-block;transform:scaleX(0.9257);transform-origin:0 0;">CD-ROM</span></div>
<div class="t" style="left:455.20px;top:1168.47px;font-size:27.5px;line-height:33.0px;"><span style="display:inline-block;transform:scaleX(0.8982);transform-origin:0 0;">598 MB</span></div>
<div class="t" style="left:455.20px;top:1201.47px;font-size:27.5px;line-height:33.0px;"><span style="display:inline-block;transform:scaleX(0.9736);transform-origin:0 0;">Online</span></div>
<div class="r" style="left:663px;top:1085px;width:559px;height:215px;background:#f0f0f0;border-top:2px solid #ffffff;border-right:3px solid #b8b8b8;border-bottom:3px solid #a8a8a8;"></div>
<div class="r" style="left:665px;top:1097.5px;width:545px;height:30px;background:#000080;"></div>
<div class="r" style="left:672px;top:1133px;width:535px;height:151px;background:#ffffff;border-top:2.5px solid #a8a8a8;border-left:2.5px solid #a8a8a8;border-right:3px solid #e6e6e6;border-bottom:2.5px solid #e6e6e6;"></div>
<div class="t" style="left:680.90px;top:1140.17px;font-size:27.5px;line-height:33.0px;font-weight:bold;-webkit-text-stroke:0;"><span style="display:inline-block;transform:scaleX(0.9753);transform-origin:0 0;">virtio-win-0.1.240&nbsp;&nbsp;(D:)</span></div>
<div class="t" style="left:680.90px;top:1172.37px;font-size:27.5px;line-height:33.0px;"><span style="display:inline-block;transform:scaleX(0.8717);transform-origin:0 0;">598 MB CDFS</span></div>
<div class="t" style="left:680.90px;top:1205.37px;font-size:27.5px;line-height:33.0px;"><span style="display:inline-block;transform:scaleX(0.9606);transform-origin:0 0;">Healthy (Primary Partition)</span></div>
<div class="r" style="left:434px;top:1452px;width:1310px;height:45px;background:#f0f0f0;border-top:3px solid #ffffff;border-bottom:2px solid #9a9a9a;border-right:3px solid #9a9a9a;"></div>
<div class="r" style="left:446px;top:1460px;width:23px;height:27px;background:#000000;"></div>
<div class="t" style="left:481.70px;top:1456.97px;font-size:27.5px;line-height:33.0px;"><span style="display:inline-block;transform:scaleX(0.9363);transform-origin:0 0;">Unallocated</span></div>
<div class="r" style="left:631px;top:1460px;width:23px;height:27px;background:#000080;"></div>
<div class="t" style="left:665.50px;top:1456.97px;font-size:27.5px;line-height:33.0px;"><span style="display:inline-block;transform:scaleX(0.9663);transform-origin:0 0;">Primary partition</span></div>
<div class="r" style="left:1752px;top:179px;width:412px;height:1319px;background:#ffffff;border-top:4px solid #7c7c7c;border-left:4px solid #7c7c7c;"></div>
<div class="r" style="left:1756px;top:183px;width:408px;height:44px;background:#f0f0f0;"></div>
<div class="r" style="left:1756px;top:227px;width:408px;height:2px;background:#a0a0a0;"></div>
<div class="r" style="left:1756px;top:231px;width:408px;height:55px;background:linear-gradient(#c2d6ee,#9ab6da);"></div>
<div class="t" style="left:1768.00px;top:189.37px;font-size:27.5px;line-height:33.0px;font-weight:bold;-webkit-text-stroke:0;"><span style="display:inline-block;transform:scaleX(0.8962);transform-origin:0 0;">Actions</span></div>
<div class="t" style="left:1773.00px;top:242.27px;font-size:27.5px;line-height:33.0px;"><span style="display:inline-block;transform:scaleX(0.9475);transform-origin:0 0;">Disk Management</span></div>
<svg style="left:2130px;top:253px" width="21" height="12" viewBox="0 0 21 12"><path d="M0 12 L10.5 0 L21 12 Z" fill="#000"/></svg>
<div class="t" style="left:1825.30px;top:294.37px;font-size:27.5px;line-height:33.0px;"><span style="display:inline-block;transform:scaleX(0.9774);transform-origin:0 0;">More Actions</span></div>
<svg style="left:2137px;top:301px" width="11" height="20" viewBox="0 0 11 20"><path d="M0 0 L11 10 L0 20 Z" fill="#000"/></svg>
<div class="r" style="left:5px;top:1501px;width:2159px;height:49px;background:#f0f0f0;border-top:1px solid #ffffff;"></div>
<div class="r" style="left:1684px;top:1504px;width:2px;height:46px;background:#d4d4d4;"></div>
<div class="r" style="left:1977px;top:1504px;width:2px;height:46px;background:#d4d4d4;"></div>
<div class="r" style="left:0px;top:1550px;width:2164px;height:2px;background:#5a7a8a;"></div>
<div class="r" style="left:0px;top:0px;width:3px;height:1552px;background:#0aa0f0;"></div>
<div class="r" style="left:3px;top:0px;width:2.2px;height:1552px;background:#1878b8;"></div>
</body></html>
